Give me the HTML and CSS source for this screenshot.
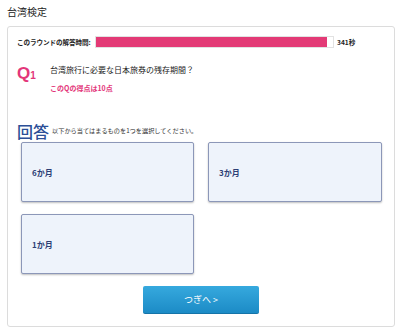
FILE: index.html
```html
<!DOCTYPE html>
<html lang="ja">
<head>
  <meta charset="UTF-8">
  <meta name="viewport" content="width=device-width, initial-scale=1.0">
  <title>台湾検定</title>
  <link rel="stylesheet" href="styles.css">
</head>
<body>
  <h1 class="page-title">台湾検定</h1>

  <div class="quiz-card">
    <!-- Timer -->
    <div class="timer-row">
      <span class="timer-label">このラウンドの解答時間:</span>
      <div class="timer-track">
        <div class="timer-fill" style="width: 97.5%"></div>
      </div>
      <span class="timer-count">341秒</span>
    </div>

    <!-- Question -->
    <div class="question">
      <div class="q-mark">Q<span class="q-num">1</span></div>
      <div class="q-body">
        <p class="q-text">台湾旅行に必要な日本旅券の残存期間？</p>
        <p class="q-score">このQの得点は10点</p>
      </div>
    </div>

    <!-- Answers -->
    <div class="answer-head">
      <span class="answer-mark">回答</span>
      <span class="answer-note">以下から当てはまるものを1つを選択してください。</span>
    </div>

    <div class="answer-grid">
      <button type="button" class="answer">6か月</button>
      <button type="button" class="answer">3か月</button>
      <button type="button" class="answer">1か月</button>
    </div>

    <div class="btn-container">
      <button type="button" class="btn-next">つぎへ &gt;</button>
    </div>
  </div>
</body>
</html>
```

FILE: styles.css
```css
/* Global */
body {
  font-family: "Noto Sans CJK JP", "Liberation Sans", sans-serif;
  background: #ffffff;
  color: #333;
  margin: 0;
  padding: 5px 8px 0 7px;
}

p {
  margin: 0;
}

.page-title {
  font-size: 10px;
  font-weight: normal;
  line-height: 14px;
  margin: 0;
  color: #222;
}

/* Card */
.quiz-card {
  margin-top: 7px;
  border: 1px solid #dcdcdc;
  border-radius: 3px;
  padding: 9px 9px 11px 9px;
  height: 279px;
}

/* Timer */
.timer-row {
  display: flex;
  align-items: center;
  height: 12px;
}

.timer-label {
  font-size: 6.6px;
  font-weight: bold;
  color: #222;
  width: 78px;
  letter-spacing: -0.1px;
}

.timer-track {
  width: 239px;
  height: 12px;
  border: 1px solid #e2e2e2;
  box-sizing: border-box;
  background: #fff;
}

.timer-fill {
  height: 100%;
  background: #e33a76;
}

.timer-count {
  font-size: 6.6px;
  font-weight: bold;
  margin-left: 3px;
  color: #222;
}

/* Question */
.question {
  display: flex;
  margin-top: 16px;
}

.q-mark {
  width: 33px;
  font-family: "Liberation Sans", sans-serif;
  font-size: 17px;
  font-weight: bold;
  line-height: 14px;
  color: #e3367a;
  padding-top: 3px;
}

.q-num {
  font-size: 10px;
}

.q-text {
  font-size: 8px;
  line-height: 12px;
  color: #222;
}

.q-score {
  margin-top: 6px;
  font-size: 7px;
  font-weight: bold;
  line-height: 12px;
  color: #e3367a;
}

/* Answers */
.answer-head {
  display: flex;
  align-items: flex-end;
  margin-top: 28px;
  height: 18px;
}

.answer-mark {
  font-size: 16px;
  font-weight: 500;
  line-height: 18px;
  color: #2c4f97;
  margin-right: 3px;
}

.answer-note {
  font-size: 6.2px;
  line-height: 12px;
  color: #333;
  padding-bottom: 3px;
}

.answer-grid {
  display: grid;
  grid-template-columns: 173px 174px;
  grid-auto-rows: 60px;
  gap: 12px 14px;
  margin: 2px 0 0 4px;
}

.answer {
  font-family: inherit;
  text-align: left;
  padding: 0 0 0 10px;
  font-size: 8px;
  font-weight: bold;
  color: #2c3e75;
  background: #eef3fb;
  border: 1px solid #8c97b8;
  border-radius: 2px;
  box-shadow: 0 1px 2px rgba(0, 0, 0, 0.25);
  cursor: pointer;
}

/* Next button */
.btn-container {
  display: flex;
  justify-content: center;
  margin-top: 12px;
}

.btn-next {
  width: 116px;
  height: 28px;
  font-family: inherit;
  font-size: 9px;
  color: #ffffff;
  background: linear-gradient(#36a9de, #1c8bc6);
  border: none;
  border-bottom: 1px solid #1574a8;
  border-radius: 2px;
  cursor: pointer;
}
```
